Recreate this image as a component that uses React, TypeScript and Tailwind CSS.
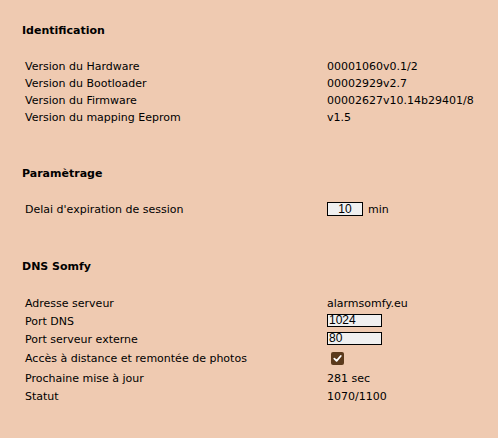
import React from "react";

const font = { fontFamily: '"DejaVu Sans", Verdana, sans-serif' };

function Row({ label, children, h = "h-[17px]" }: { label: string; children?: React.ReactNode; h?: string }) {
  return (
    <div className={`flex items-center ${h}`}>
      <div className="w-[302px] shrink-0">{label}</div>
      <div className="flex items-center">{children}</div>
    </div>
  );
}

function Title({ children }: { children: React.ReactNode }) {
  return <div className="h-[17px] leading-[17px] font-bold -ml-[3px]">{children}</div>;
}

export default function App() {
  return (
    <div
      className="w-[498px] h-[438px] bg-[#efcab1] text-black text-[11px] leading-[17px] pl-[25px] pt-[22px] overflow-hidden"
      style={font}
    >
      <Title>Identification</Title>
      <div className="mt-[19px]">
        <Row label="Version du Hardware">00001060v0.1/2</Row>
        <Row label="Version du Bootloader">00002929v2.7</Row>
        <Row label="Version du Firmware">00002627v10.14b29401/8</Row>
        <Row label="Version du mapping Eeprom">v1.5</Row>
      </div>

      <div className="mt-[39px]">
        <Title>Paramètrage</Title>
      </div>
      <div className="mt-[19px]">
        <Row label="Delai d'expiration de session">
          <div
            className="-mt-[1px] w-[36px] h-[14px] border border-black bg-[#f0f0f0] text-[12px] leading-[12px] text-center"
            style={{ fontFamily: '"Liberation Sans", Arial, sans-serif' }}
          >
            10
          </div>
          <span className="ml-[5px]">min</span>
        </Row>
      </div>

      <div className="mt-[40px]">
        <Title>DNS Somfy</Title>
      </div>
      <div className="mt-[19px]">
        <Row label="Adresse serveur" h="h-[18px]">alarmsomfy.eu</Row>
        <Row label="Port DNS" h="h-[18px]">
          <div
            className="-mt-[1px] w-[55px] h-[13px] border border-black bg-[#f0f0f0] text-[12px] leading-[11px] pl-[1px]"
            style={{ fontFamily: '"Liberation Sans", Arial, sans-serif' }}
          >
            1024
          </div>
        </Row>
        <Row label="Port serveur externe" h="h-[18px]">
          <div
            className="-mt-[1px] w-[55px] h-[13px] border border-black bg-[#f0f0f0] text-[12px] leading-[11px] pl-[1px]"
            style={{ fontFamily: '"Liberation Sans", Arial, sans-serif' }}
          >
            80
          </div>
        </Row>
        <Row label="Accès à distance et remontée de photos" h="h-[20px]">
          <div className="ml-[4px] w-[13px] h-[13px] rounded-[2px] bg-[#5b3a1c] flex items-center justify-center">
            <svg width="9" height="9" viewBox="0 0 10 10">
              <path d="M1.5 5.2 L4 7.6 L8.6 2.2" fill="none" stroke="white" strokeWidth="2" strokeLinecap="round" strokeLinejoin="round" />
            </svg>
          </div>
        </Row>
        <Row label="Prochaine mise à jour" h="h-[20px]">281 sec</Row>
        <Row label="Statut">1070/1100</Row>
      </div>
    </div>
  );
}
